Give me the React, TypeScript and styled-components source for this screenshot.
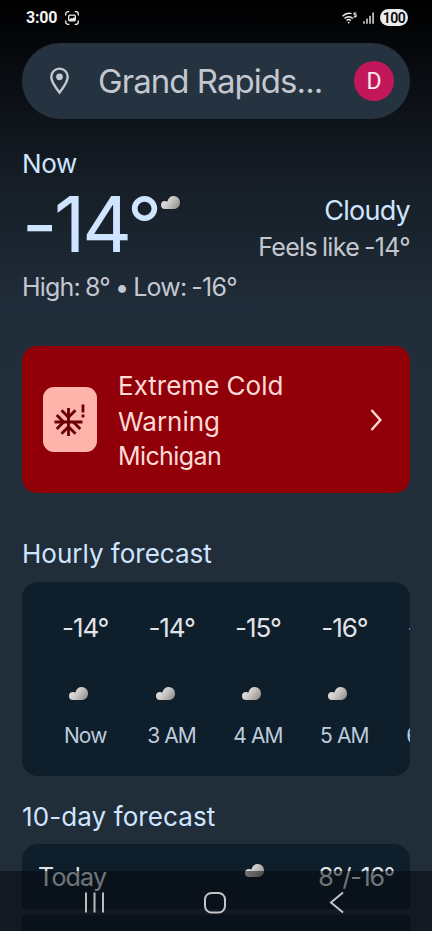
import React from 'react';
import styled, { createGlobalStyle } from 'styled-components';

const GlobalStyle = createGlobalStyle`
  * { box-sizing: border-box; }
  html, body { margin: 0; padding: 0; background: #212d39; }
`;

const Screen = styled.div`
  position: relative;
  width: 432px;
  height: 931px;
  overflow: hidden;
  padding: 0 22px;
  display: flex;
  flex-direction: column;
  background: linear-gradient(180deg, #000 0, #05070a 45px, #10151c 125px, #18212a 210px, #202c39 305px, #212d39 400px);
  font-family: Inter, Roboto, sans-serif;
  color: #c3c7cf;
`;

const Text = styled.span<{ $size: number; $track?: number; $word?: number; $color?: string; $line?: number; $weight?: number }>`
  display: block;
  white-space: nowrap;
  font-size: ${p => p.$size}px;
  line-height: ${p => p.$line ?? 36}px;
  letter-spacing: ${p => p.$track ?? 0}px;
  word-spacing: ${p => p.$word ?? 0}px;
  font-weight: ${p => p.$weight ?? 400};
  color: ${p => p.$color ?? 'inherit'};
`;

const StatusBar = styled.header`
  flex: none;
  height: 43px;
  padding: 9px 2px 0 4px;
  display: flex;
  align-items: flex-start;
  justify-content: space-between;
  color: #f4f4f4;
  font-family: Roboto, sans-serif;
`;

const StatusGroup = styled.div<{ $gap: number }>`
  display: flex;
  align-items: center;
  height: 17px;
  gap: ${p => p.$gap}px;
`;

const Battery = styled.span`
  width: 28px;
  height: 17px;
  border-radius: 9px;
  background: #ececec;
  color: #080808;
  font-size: 14px;
  font-weight: 600;
  line-height: 18px;
  letter-spacing: -0.5px;
  text-align: center;
`;

const SearchBar = styled.div`
  flex: none;
  height: 76px;
  border-radius: 38px;
  background: #25323f;
  display: flex;
  align-items: center;
  padding: 0 16px 0 28px;
`;

const SearchText = styled.div`
  flex: 1;
  margin-left: 28px;
`;

const Avatar = styled.div`
  width: 40px;
  height: 40px;
  border-radius: 50%;
  background: #c2185b;
  color: #fbe9f0;
  font: 400 23px/41px Roboto, sans-serif;
  text-align: center;
`;

const Current = styled.section`
  flex: none;
  height: 227px;
  padding-top: 27px;
  display: grid;
  grid-template-columns: auto 1fr;
  grid-template-rows: 36px 78px 36px;
`;

const BigTemp = styled.div`
  grid-row: 2;
  grid-column: 1;
  display: flex;
  align-items: flex-start;
`;

const CloudSlot = styled.div`
  padding: 14px 0 0 2px;
`;

const Condition = styled.div`
  grid-row: 2;
  grid-column: 2;
  padding-top: 11px;
  display: flex;
  flex-direction: column;
  align-items: flex-end;
`;

const Summary = styled.div`
  grid-row: 3;
  grid-column: 1 / 3;
  padding-top: 9px;
`;

const Alert = styled.section`
  flex: none;
  height: 147px;
  border-radius: 15px;
  background: #910009;
  color: #ffdad6;
  display: flex;
  align-items: center;
  padding: 0 28px 0 21px;
`;

const AlertBadge = styled.div`
  width: 54px;
  height: 65px;
  border-radius: 11px;
  background: #ffb4ab;
  display: flex;
  align-items: center;
  justify-content: center;
`;

const AlertText = styled.div`
  flex: 1;
  padding: 1px 0 0 21px;
`;

const Heading = styled.h2<{ $top: number; $bottom: number }>`
  flex: none;
  height: 36px;
  margin: ${p => p.$top}px 0 ${p => p.$bottom}px;
  font-weight: 400;
`;

const HourlyCard = styled.section`
  flex: none;
  height: 194px;
  border-radius: 16px;
  background: #0e1e2a;
  overflow: hidden;
  display: flex;
  padding: 28px 0 0 20px;
`;

const Hour = styled.div`
  flex: none;
  width: 86.4px;
  display: flex;
  flex-direction: column;
  align-items: center;
`;

const HourCloud = styled.div`
  height: 13px;
  margin: 41px 13px 18px 0;
`;

const DayRow = styled.section<{ $first?: boolean }>`
  flex: none;
  height: 65px;
  margin-bottom: 6px;
  border-radius: ${p => (p.$first ? '16px 16px 4px 4px' : '4px')};
  background: #0e1e2a;
  display: grid;
  grid-template-columns: 207px 1fr auto;
  padding: 15px 16px 0 16px;
`;

const DayCloud = styled.div`
  padding-top: 5px;
`;

const NavBar = styled.nav`
  position: absolute;
  left: 0;
  bottom: 0;
  width: 432px;
  height: 60px;
  background: rgba(4, 5, 9, 0.5);
  display: flex;
  justify-content: space-between;
  padding: 20px 87px 0 83px;
`;

const HomeKey = styled.div`
  margin-right: 4px;
`;

const Icon = styled.svg`
  display: block;
  flex: none;
`;

const Cloud = ({ id }: { id: string }) => (
  <Icon width="19" height="13" viewBox="0 0 19 13">
    <defs>
      <linearGradient id={id} x1="0" y1="0.2" x2="1" y2="0.7">
        <stop offset="0" stopColor="#e8e6e4" />
        <stop offset="0.5" stopColor="#cbc9c7" />
        <stop offset="1" stopColor="#94928f" />
      </linearGradient>
    </defs>
    <path
      d="M4 13a4 4 0 0 1 0-8c1 0 1.800.2 2.400.6C7.200 2 9.500 0 12.600 0A6.300 6.300 0 0 1 19 6.400C19 10.300 16.300 13 12.500 13Z"
      fill={`url(#${id})`}
    />
  </Icon>
);

const hours = [
  { temp: '-14°', label: 'Now' },
  { temp: '-14°', label: '3 AM' },
  { temp: '-15°', label: '4 AM' },
  { temp: '-16°', label: '5 AM' },
  { temp: '-16°', label: '6 AM' },
];

const PALE_BLUE = '#cfe5ff';

export default function App() {
  return (
    <>
      <GlobalStyle />
      <Screen>
        <StatusBar>
          <StatusGroup $gap={8}>
            <Text $size={16} $line={17} $weight={700} $track={-0.2}>3:00</Text>
            <Icon width="14" height="14" viewBox="0 0 14 14" fill="none" stroke="#f4f4f4" strokeWidth="1.3" strokeLinecap="round">
              <path d="M.7 4V3A2.300 2.300 0 0 1 3 .7h.8M10.200.7H11A2.300 2.300 0 0 1 13.300 3v1M13.300 10v1a2.300 2.300 0 0 1-2.300 2.300h-.8M3.800 13.300H3A2.300 2.300 0 0 1 .7 11v-1" />
              <rect x="3.700" y="4.200" width="6.600" height="5.600" rx="1" />
              <path d="M4 9l2.200-2 1 .8L9 6.300 10 7.500V9.500H4Z" fill="#f4f4f4" stroke="none" />
            </Icon>
          </StatusGroup>
          <StatusGroup $gap={5.5}>
            <Icon width="15" height="12" viewBox="0 0 15 12" fill="none" stroke="#f0f0f0" strokeWidth="1.400">
              <path d="M.6 4.300A8.800 8.800 0 0 1 9.500 1.700M2.500 6.500a6 6 0 0 1 8.400 0M4.500 8.600a3.200 3.200 0 0 1 4.400 0" />
              <circle cx="6.700" cy="10.600" r="0.900" fill="#f0f0f0" stroke="none" />
              <path d="M14.500 1H12.200v1.700h1a1 1 0 0 1 0 2.100h-1.600" strokeWidth="1.200" />
            </Icon>
            <Icon width="12" height="12" viewBox="0 0 12 12" fill="#f0f0f0">
              <rect x="0.300" y="9.300" width="1.400" height="2.400" />
              <rect x="3.300" y="6.600" width="1.400" height="5.100" />
              <rect x="6.300" y="3.800" width="1.400" height="7.900" />
              <rect x="9.400" y="0.500" width="1.400" height="11.200" />
            </Icon>
            <Battery>100</Battery>
          </StatusGroup>
        </StatusBar>

        <SearchBar>
          <Icon width="20" height="28" viewBox="0 0 20 28" fill="none" stroke="#c3c7cf" strokeWidth="2.400">
            <path d="M9.500 25.500C5.500 20 1.300 15.500 1.300 9.800a8.200 8.200 0 0 1 16.400 0c0 5.700-4.200 10.200-8.200 15.700Z" />
            <circle cx="9.500" cy="9.800" r="3.400" fill="#c3c7cf" stroke="none" />
          </Icon>
          <SearchText>
            <Text $size={33} $line={75} $track={-0.95}>Grand Rapids...</Text>
          </SearchText>
          <Avatar>D</Avatar>
        </SearchBar>

        <Current>
          <Text $size={26} $track={-0.4} $color={PALE_BLUE}>Now</Text>
          <Condition>
            <Text $size={27} $track={-0.75} $color={PALE_BLUE}>Cloudy</Text>
            <Text $size={25} $track={-0.7} $word={-1.3}>Feels like -14°</Text>
          </Condition>
          <BigTemp>
            <Text $size={77} $line={84} $track={-3.3} $color={PALE_BLUE}>-14°</Text>
            <CloudSlot><Cloud id="cloud-now" /></CloudSlot>
          </BigTemp>
          <Summary>
            <Text $size={25} $track={-0.8} $word={-1.2}>High: 8° • Low: -16°</Text>
          </Summary>
        </Current>

        <Alert>
          <AlertBadge>
            <Icon width="32" height="34" viewBox="0 0 32 34" fill="none" stroke="#690005" strokeWidth="2.800">
              <path d="M14.500 5v28M.500 19h28" />
              <path d="M7.500 7.200l7 7 7-7M7.500 30.800l7-7 7 7M2.700 12l7 7-7 7M26.300 26l-7-7" />
              <path d="M29 1.500v8M29 11.500v3" />
            </Icon>
          </AlertBadge>
          <AlertText>
            <Text $size={26}>Extreme Cold</Text>
            <Text $size={26}>Warning</Text>
            <Text $size={25} $line={32} $track={-0.6}>Michigan</Text>
          </AlertText>
          <Icon width="12" height="22" viewBox="0 0 12 22" fill="none" stroke="#ffdad6" strokeWidth="2.400">
            <path d="M1.500 1L10.300 11 1.500 21" />
          </Icon>
        </Alert>

        <Heading $top={43} $bottom={10}><Text $size={26} $color={PALE_BLUE}>Hourly forecast</Text></Heading>
        <HourlyCard>
          {hours.map((hour, i) => (
            <Hour key={hour.label}>
              <Text $size={26} $track={-1.1} $color="#e1e3e9">{hour.temp}</Text>
              <HourCloud><Cloud id={`cloud-hour-${i}`} /></HourCloud>
              <Text $size={21} $track={-0.9} $color="#bdcbdc">{hour.label}</Text>
            </Hour>
          ))}
        </HourlyCard>

        <Heading $top={23} $bottom={9}><Text $size={26} $track={0.1} $color={PALE_BLUE}>10-day forecast</Text></Heading>
        <DayRow $first>
          <Text $size={25} $track={-0.8} $color="#dfe3e8">Today</Text>
          <DayCloud><Cloud id="cloud-today" /></DayCloud>
          <Text $size={25} $track={-1.2} $color="#dfe3e8">8°/-16°</Text>
        </DayRow>
        <DayRow />

        <NavBar>
          <Icon width="22" height="23" viewBox="0 0 22 23" stroke="#b9bbbd" strokeWidth="2">
            <path d="M3 1.500v20M11.500 1.500v20M20 1.500v20" />
          </Icon>
          <HomeKey>
            <Icon width="24" height="23" viewBox="0 0 24 23" fill="none" stroke="#c3c5c7" strokeWidth="2">
              <rect x="2" y="2" width="20" height="19.500" rx="6.500" />
            </Icon>
          </HomeKey>
          <Icon width="16" height="23" viewBox="0 0 16 23" fill="none" stroke="#c3c5c7" strokeWidth="2">
            <path d="M14 1.500L2 11.500l12 10" />
          </Icon>
        </NavBar>
      </Screen>
    </>
  );
}
